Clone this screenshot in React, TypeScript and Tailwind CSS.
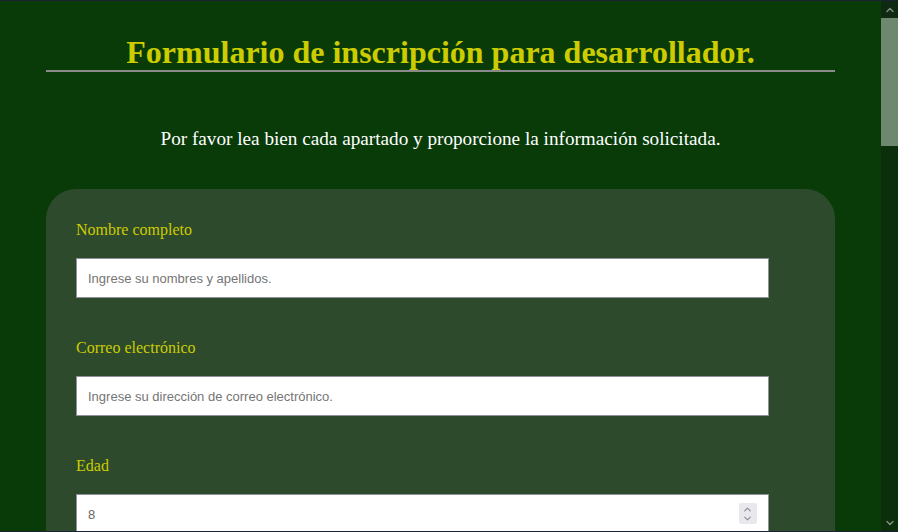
import { ChevronDown, ChevronUp } from 'lucide-react'

const serif = { fontFamily: '"Liberation Serif", "Times New Roman", serif' }

function Field({ label, placeholder }: { label: string; placeholder: string }) {
  return (
    <div className="mb-[40px]">
      <label className="block text-[16px] leading-[20px] text-[#cccc00] mb-[18px] font-['Liberation_Serif',serif]">
        {label}
      </label>
      <input
        type="text"
        placeholder={placeholder}
        className="block w-[95%] h-[40px] bg-white border border-[#8f8f9d] px-[11px] text-[13px] text-[#555] placeholder:text-[#757575] font-['Liberation_Sans',sans-serif] outline-none"
      />
    </div>
  )
}

export default function App() {
  return (
    <div className="w-[898px] h-[532px] flex overflow-hidden border-t border-b border-[#1b2231] bg-[#083b08]">
      <main className="flex-1 h-full overflow-hidden px-[46px]">
        <h1
          className="mt-[33px] text-center text-[32px] leading-[36px] font-bold text-[#cccc00] border-b-2 border-[#8a8a8a]"
          style={serif}
        >
          Formulario de inscripción para desarrollador.
        </h1>
        <p className="mt-[56px] text-center text-[19.2px] leading-[22px] text-white" style={serif}>
          Por favor lea bien cada apartado y proporcione la información solicitada.
        </p>
        <form className="mt-[39px] bg-[#2e4a2d] rounded-t-[30px] px-[30px] pt-[31px] h-[400px]">
          <Field label="Nombre completo" placeholder="Ingrese su nombres y apellidos." />
          <Field label="Correo electrónico" placeholder="Ingrese su dirección de correo electrónico." />
          <div>
            <label className="block text-[16px] leading-[20px] text-[#cccc00] mb-[18px] font-['Liberation_Serif',serif]">
              Edad
            </label>
            <div className="relative w-[95%]">
              <input
                type="text"
                readOnly
                value="8"
                className="block w-full h-[40px] bg-white border border-[#8f8f9d] px-[11px] text-[13px] text-[#666] font-['Liberation_Sans',sans-serif] outline-none"
              />
              <div className="absolute right-[12px] top-[9px] w-[18px] h-[21px] bg-[#e9e9ed] rounded-[2px] flex flex-col items-center justify-center text-[#8d8d96]">
                <ChevronUp size={11} strokeWidth={2.5} className="-mb-[1px]" />
                <ChevronDown size={11} strokeWidth={2.5} className="-mt-[1px]" />
              </div>
            </div>
          </div>
        </form>
      </main>
      <div className="w-[17px] h-full flex flex-col bg-[#0b2e0b]">
        <div className="h-[17px] flex items-center justify-center bg-[#0e2a10] text-[#7d8f7e]">
          <ChevronUp size={12} strokeWidth={3} />
        </div>
        <div className="h-[128px] bg-[#6e876f]" />
        <div className="flex-1" />
        <div className="h-[17px] flex items-center justify-center text-[#7d8f7e]">
          <ChevronDown size={12} strokeWidth={3} />
        </div>
      </div>
    </div>
  )
}
